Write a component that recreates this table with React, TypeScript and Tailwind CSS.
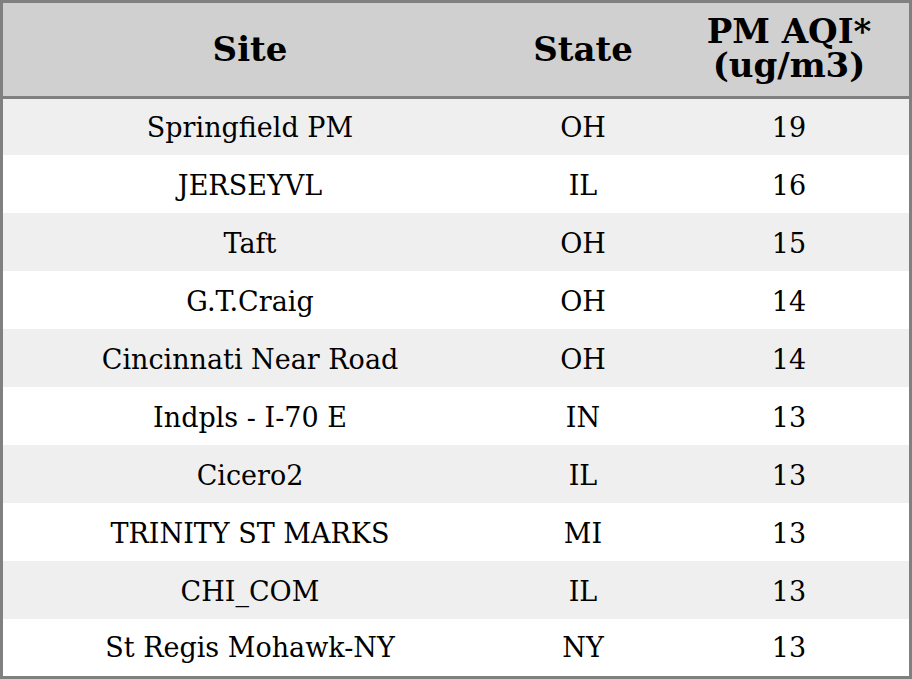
import React from 'react';

const rows = [
  ['Springfield PM', 'OH', '19'],
  ['JERSEYVL', 'IL', '16'],
  ['Taft', 'OH', '15'],
  ['G.T.Craig', 'OH', '14'],
  ['Cincinnati Near Road', 'OH', '14'],
  ['Indpls - I-70 E', 'IN', '13'],
  ['Cicero2', 'IL', '13'],
  ['TRINITY ST MARKS', 'MI', '13'],
  ['CHI_COM', 'IL', '13'],
  ['St Regis Mohawk-NY', 'NY', '13'],
];

const App = () => {
  return (
    <div className="w-[912px] h-[679px] border-[3px] border-[#808080] bg-white flex flex-col text-black font-['DejaVu_Serif',serif]">
      {/* header */}
      <div className="h-[96px] shrink-0 bg-[#d0d0d0] border-b-[3px] border-[#808080] flex items-center font-bold text-[34px] leading-[35px]">
        <div className="w-[494px] text-center">Site</div>
        <div className="w-[172px] text-center">State</div>
        <div className="flex-1 text-center leading-[34px] mb-[3px]">
          PM AQI*
          <br />
          (ug/m3)
        </div>
      </div>
      <div className="flex-1 flex flex-col text-[27px]">
        {rows.map(([site, state, pm], i) => (
          <div
            key={site}
            className={`flex items-center ${i === 0 ? 'h-[56px] pt-[3px]' : i === rows.length - 1 ? 'flex-1 pt-[2px]' : 'h-[58px] pt-[4px]'} ${i % 2 === 0 ? 'bg-[#efefef]' : 'bg-white'}`}
          >
            <div className="w-[494px] text-center">{site}</div>
            <div className="w-[172px] text-center">{state}</div>
            <div className="flex-1 text-center">{pm}</div>
          </div>
        ))}
      </div>
    </div>
  );
};

export default App;
